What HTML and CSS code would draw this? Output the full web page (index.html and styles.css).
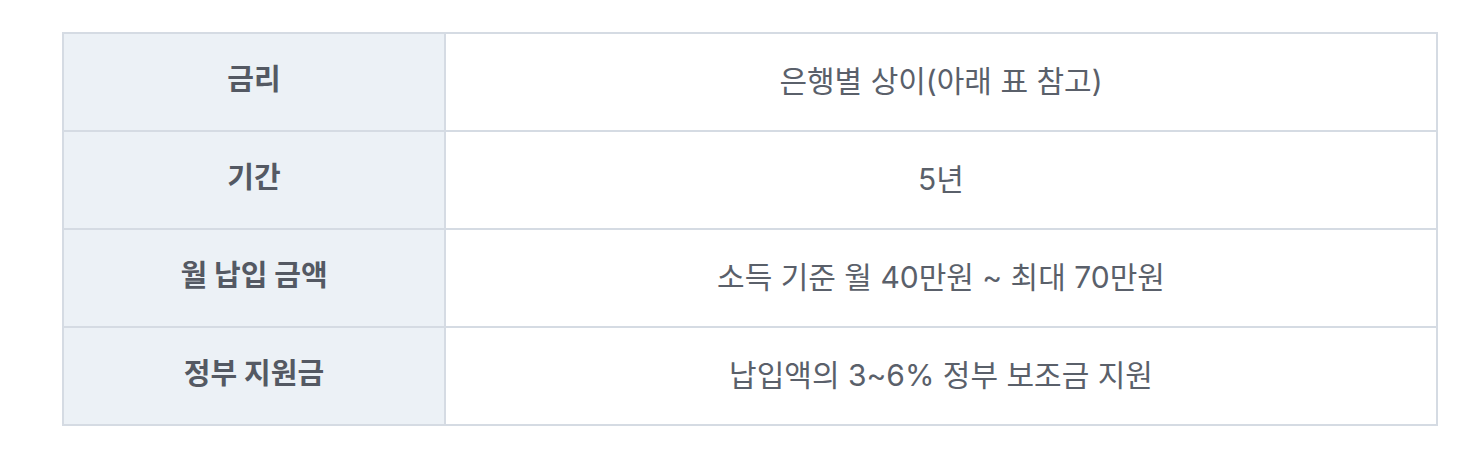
FILE: index.html
```html
<!DOCTYPE html>
<html lang="ko">
<head>
<meta charset="utf-8">
<link rel="stylesheet" href="styles.css">
</head>
<body>
<div class="wrap">
<table class="info">
<tbody>
<tr><th>금리</th><td>은행별 상이(아래 표 참고)</td></tr>
<tr><th>기간</th><td>5년</td></tr>
<tr><th>월 납입 금액</th><td>소득 기준 월 40만원 ~ 최대 70만원</td></tr>
<tr><th>정부 지원금</th><td>납입액의 3~6% 정부 보조금 지원</td></tr>
</tbody>
</table>
</div>
</body>
</html>
```
FILE: styles.css
```css
html, body { margin: 0; padding: 0; background: #fff; }
.wrap { padding: 32px 44px 0 62px; }
.info {
  width: 100%;
  border-collapse: collapse;
  font-family: Inter, "Noto Sans CJK KR", sans-serif;
  color: #5a606a;
}
.info th, .info td {
  border: 2px solid #d5dbe3;
  height: 98px;
  padding: 0 0 3px;
  text-align: center;
  vertical-align: middle;
  box-sizing: border-box;
  line-height: 1.2;
}
.info th {
  width: 382px;
  background: #ecf1f6;
  font-size: 29px;
  font-weight: 700;
  color: #545963;
}
.info td {
  font-size: 30px;
  font-weight: 400;
}
```
